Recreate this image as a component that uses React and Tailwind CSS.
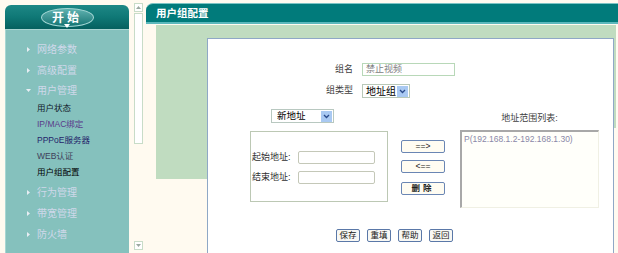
import React from 'react';

const mainMenu1 = ['网络参数', '高级配置'];
const subMenu = [
  { name: '用户状态', color: 'text-[#101828]' },
  { name: 'IP/MAC绑定', color: 'text-[#5a3a8a]' },
  { name: 'PPPoE服务器', color: 'text-[#24246a]' },
  { name: 'WEB认证', color: 'text-[#40405a]' },
  { name: '用户组配置', color: 'text-[#000000]' },
];
const mainMenu2 = ['行为管理', '带宽管理', '防火墙'];

const Tri = ({ down }) => (
  <svg width="5" height="5" viewBox="0 0 5 5" className="mr-[6px] shrink-0">
    {down ? <path d="M0 1 L5 1 L2.5 4 Z" fill="#e8eef4" /> : <path d="M1 0 L4 2.5 L1 5 Z" fill="#e8eef4" />}
  </svg>
);

const Arrow = () => (
  <div className="flex h-[11px] w-[11px] items-center justify-center bg-[#a9c9f2]">
    <svg width="7" height="5" viewBox="0 0 7 5">
      <path d="M1 1 L3.5 3.5 L6 1" stroke="#2a4a8a" strokeWidth="1.3" fill="none" />
    </svg>
  </div>
);

function Sidebar() {
  return (
    <div className="flex h-full w-[146px] shrink-0">
      <div className="ml-[5px] mt-[5px] flex w-[124px] flex-col">
        {/* 开始 header */}
        <div className="relative flex h-[25px] items-center justify-center rounded-t-[6px] bg-gradient-to-b from-[#1d8886] via-[#0f7876] to-[#05605f] border-b border-[#a8d4d2]">
          <div className="flex h-[19px] w-[53px] items-center justify-center rounded-[50%] border border-[#a6d8d6] bg-gradient-to-b from-[#5fb2b0] to-[#0f7574]">
            <span className="text-[12px] font-bold leading-none tracking-[3px] text-white font-['Noto_Sans_CJK_SC',sans-serif]">开始</span>
          </div>
          <svg width="6" height="4" viewBox="0 0 6 4" className="absolute bottom-[1px] left-[59px]">
            <path d="M0 0 L6 0 L3 4 Z" fill="#ffffff" />
          </svg>
        </div>
        {/* menu body */}
        <div className="flex-1 border-l border-[#a8d6d2] bg-[#85c1bd] pt-[9px] font-['Liberation_Sans','Noto_Sans_CJK_SC',sans-serif]">
          {mainMenu1.map((m) => (
            <div key={m} className="flex h-[21px] items-center pl-[20px] text-[10px] text-[#cfd8ea]">
              <Tri />
              {m}
            </div>
          ))}
          <div className="flex h-[19px] items-center pl-[20px] text-[10px] text-[#cfd8ea]">
            <Tri down />
            用户管理
          </div>
          {subMenu.map((s) => (
            <div key={s.name} className={`flex h-[16px] items-center pl-[31px] text-[8.5px] ${s.color}`}>
              {s.name}
            </div>
          ))}
          <div className="mt-[2px]">
            {mainMenu2.map((m) => (
              <div key={m} className="flex h-[21px] items-center pl-[20px] text-[10px] text-[#cfd8ea]">
                <Tri />
                {m}
              </div>
            ))}
          </div>
        </div>
      </div>
      {/* scrollbar */}
      <div className="ml-[5px] flex h-full w-[9px] flex-col">
        <div className="mt-[3px] flex h-[9px] items-center justify-center border border-[#c8dcc8] bg-white">
          <svg width="5" height="3" viewBox="0 0 5 3"><path d="M0 3 L5 3 L2.5 0 Z" fill="#9aa8a0" /></svg>
        </div>
        <div className="mt-[1px] h-[131px] border border-[#c8dcc8] bg-white" />
        <div className="flex-1" />
        <div className="mb-[3px] flex h-[9px] items-center justify-center border border-[#c8dcc8] bg-white">
          <svg width="5" height="3" viewBox="0 0 5 3"><path d="M0 0 L5 0 L2.5 3 Z" fill="#9aa8a0" /></svg>
        </div>
      </div>
    </div>
  );
}

function Btn({ children, w = 'w-[44px]' }) {
  return (
    <div className={`flex h-[13px] ${w} items-center justify-center rounded-[2px] border-[1.5px] border-[#6a86b4] bg-[#fffcf2] text-[8.5px] leading-none text-[#202020]`}>
      {children}
    </div>
  );
}

function Panel() {
  return (
    <div className="h-[215px] w-[407px] border-l border-r border-t-[1.5px] border-[#8fa8c6] bg-white text-[9px] text-[#303030] font-['Liberation_Sans','Noto_Sans_CJK_SC',sans-serif]">
      {/* 组名 */}
      <div className="mt-[24px] flex h-[13px] items-center">
        <div className="w-[145px] text-right text-[#404040]">组名</div>
        <div className="ml-[9px] flex h-[13px] w-[93px] items-center border border-[#b8d8b8] pl-[3px] text-[#808080]">禁止视频</div>
      </div>
      {/* 组类型 */}
      <div className="mt-[8px] flex h-[14px] items-center">
        <div className="w-[145px] text-right text-[#404040]">组类型</div>
        <div className="ml-[9px] flex h-[14px] w-[48px] items-center justify-between border border-[#b8c8b8] pl-[3px] pr-[1px] text-[10px] text-black">
          地址组
          <Arrow />
        </div>
      </div>
      {/* address section */}
      <div className="ml-[42px] mt-[11px] flex">
        <div className="w-[138px]">
          <div className="ml-[21px] flex h-[14px] w-[63px] items-center justify-between border border-[#b8c8c0] pl-[5px] pr-[1px] text-[9.5px] text-black">
            新地址
            <Arrow />
          </div>
          <div className="mt-[8px] h-[71px] w-[138px] border border-[#bcc8b4] pl-[1px] pt-[19px]">
            <div className="flex h-[13px] items-center">
              <div className="w-[46px]">起始地址:</div>
              <div className="h-[13px] w-[77px] rounded-[2px] border border-[#c4c8b8] bg-white" />
            </div>
            <div className="mt-[7px] flex h-[13px] items-center">
              <div className="w-[46px]">结束地址:</div>
              <div className="h-[13px] w-[77px] rounded-[2px] border border-[#c4c8b8] bg-white" />
            </div>
          </div>
        </div>
        <div className="ml-[13px] pt-[31px]">
          <Btn>==&gt;</Btn>
          <div className="mt-[7px]"><Btn>&lt;==</Btn></div>
          <div className="mt-[9px]"><Btn><span className="tracking-[3px] font-bold">删除</span></Btn></div>
        </div>
        <div className="ml-[15px] w-[139px]">
          <div className="h-[21px] pt-[4px] text-center leading-[10px] text-[#404040]">地址范围列表:</div>
          <div className="h-[78px] w-[139px] border-l-2 border-t-2 border-r border-b border-l-[#a8a8a8] border-t-[#a8a8a8] border-r-[#f0f0e4] border-b-[#f0f0e4] bg-[#fffffa] pl-[2px] pt-[1px] text-[8.5px] text-[#8a88a8]">
            P(192.168.1.2-192.168.1.30)
          </div>
        </div>
      </div>
      {/* bottom buttons */}
      <div className="ml-[128px] mt-[21px] flex gap-[7px]">
        {['保存', '重填', '帮助', '返回'].map((b) => (
          <div key={b} className="flex h-[13px] w-[24px] items-center justify-center rounded-[2px] border-[1.5px] border-[#5a78a8] bg-[#f8f8f4] text-[8.5px] leading-none text-[#202020]">
            {b}
          </div>
        ))}
      </div>
    </div>
  );
}

export default function App() {
  return (
    <div className="flex h-[253px] w-[618px] overflow-hidden bg-[#fffaf0]">
      <Sidebar />
      <div className="flex flex-1 flex-col">
        <div className="mt-[3px] flex h-[19px] items-center rounded-tl-[7px] border-t border-[#7cc4c4] bg-[#017b7b] pl-[10px]">
          <span className="text-[10.5px] font-bold text-white font-['Noto_Sans_CJK_SC',sans-serif]">用户组配置</span>
        </div>
        <div className="h-[1.5px] bg-[#5cb8bc]" />
        <div className="ml-[10px] mt-[1.5px] w-[460px]">
          <div className="h-[13px] bg-[#c0dcc0]" />
          <div className="flex items-start">
            <div className="h-[141px] w-[51px] bg-[#c0dcc0]" />
            <Panel />
            <div className="h-[90px] w-[2px] bg-[#c0dcc0]" />
          </div>
        </div>
      </div>
    </div>
  );
}
